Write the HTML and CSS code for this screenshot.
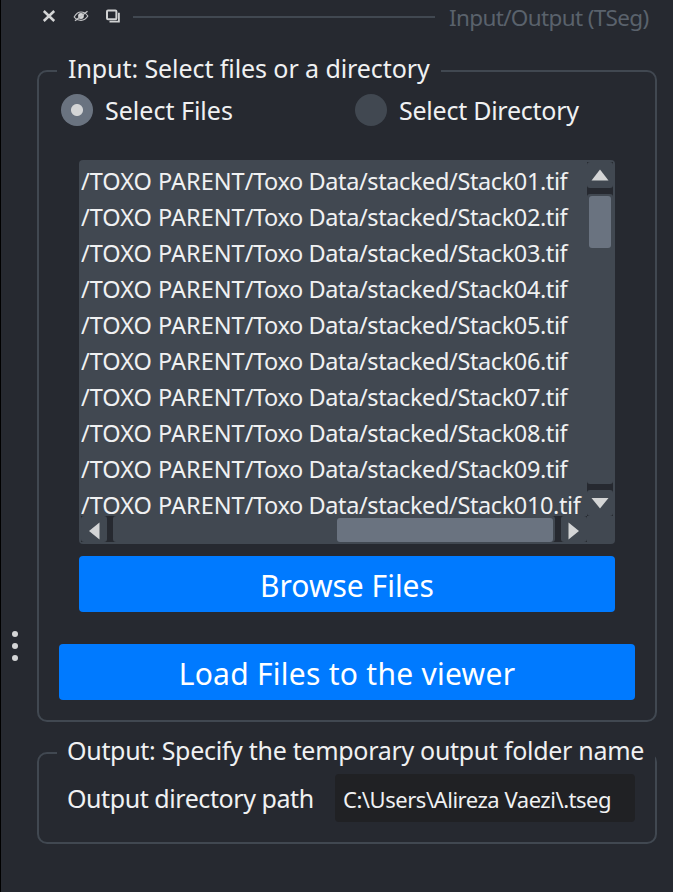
FILE: index.html
```html
<!DOCTYPE html>
<html lang="en">
<head>
<meta charset="utf-8">
<title>Input/Output (TSeg)</title>
<link rel="stylesheet" href="styles.css">
</head>
<body>
<div class="dock">
  <header class="titlebar">
    <svg class="icon" width="14" height="14" viewBox="0 0 14 14"><path d="M1.800 2 12.200 12M12.200 2 1.800 12" stroke="#d4d5d6" stroke-width="2.500"/></svg>
    <svg class="icon" width="16" height="14" viewBox="0 0 16 14" fill="none" stroke="#c3c4c6"><path d="M1.200 8C3 4.600 5.500 3 8 3s5 1.400 6.800 4C13 10 10.500 11.300 8 11.300S3 10.500 1.200 8Z" stroke-width="1.200"/><circle cx="8" cy="7" r="2.900" fill="#d4d5d6" stroke="none"/><path d="M2 11.700 14.500 2.300" stroke-width="1.400"/></svg>
    <svg class="icon" width="16" height="14" viewBox="0 0 16 14" fill="none" stroke="#d0d1d2"><rect x="2" y="1.500" width="9.400" height="8.800" rx="1" stroke-width="2"/><path d="M13.900 3.800V12.700H4.500" stroke-width="1.800"/></svg>
    <span class="rule"></span>
    <h1 class="title">Input/Output (TSeg)</h1>
  </header>
  <div class="body">
    <div class="grip"><i></i><i></i><i></i></div>
    <main class="groups">
      <fieldset class="group input-group">
        <legend><span class="t-input">Input: Select files or a directory</span></legend>
        <div class="radios">
          <label class="radio"><span class="dot on"></span><span class="t-files">Select Files</span></label>
          <label class="radio"><span class="dot"></span><span class="t-dir">Select Directory</span></label>
        </div>
        <div class="list">
          <div class="rows">
            <div>/TOXO PARENT<span>/Toxo Data/stacked/Stack01.tif</span></div>
            <div>/TOXO PARENT<span>/Toxo Data/stacked/Stack02.tif</span></div>
            <div>/TOXO PARENT<span>/Toxo Data/stacked/Stack03.tif</span></div>
            <div>/TOXO PARENT<span>/Toxo Data/stacked/Stack04.tif</span></div>
            <div>/TOXO PARENT<span>/Toxo Data/stacked/Stack05.tif</span></div>
            <div>/TOXO PARENT<span>/Toxo Data/stacked/Stack06.tif</span></div>
            <div>/TOXO PARENT<span>/Toxo Data/stacked/Stack07.tif</span></div>
            <div>/TOXO PARENT<span>/Toxo Data/stacked/Stack08.tif</span></div>
            <div>/TOXO PARENT<span>/Toxo Data/stacked/Stack09.tif</span></div>
            <div>/TOXO PARENT<span>/Toxo Data/stacked/Stack010.tif</span></div>
          </div>
          <div class="vbar">
            <span class="step"><svg width="26" height="26"><path d="M13 7.500 21.500 18.500H4.500Z"/></svg></span>
            <span class="track"><b></b></span>
            <span class="step"><svg width="26" height="26"><path d="M4.500 8H21.500L13 18.500Z"/></svg></span>
          </div>
          <div class="hbar">
            <span class="step"><svg width="26" height="26"><path d="M18.500 6.500V23.500L8 15Z"/></svg></span>
            <span class="track"><b></b></span>
            <span class="step"><svg width="26" height="26"><path d="M7.500 6.500V23.500L18 15Z"/></svg></span>
          </div>
        </div>
        <button class="btn browse"><span>Browse Files</span></button>
        <button class="btn load"><span>Load Files to the viewer</span></button>
      </fieldset>
      <fieldset class="group output-group">
        <legend><span class="t-output">Output: Specify the temporary output folder name</span></legend>
        <div class="field">
          <span class="t-path">Output directory path</span>
          <div class="entry"><span>C:\Users\Alireza Vaezi\.tseg</span></div>
        </div>
      </fieldset>
    </main>
  </div>
</div>
</body>
</html>
```

FILE: styles.css
```css
* { box-sizing: border-box; }
body {
  margin: 0;
  background: #262930;
  color: #f0f1f2;
  font: 25px/36px "Noto Sans", sans-serif;
  white-space: nowrap;
  overflow: hidden;
}
.dock { height: 892px; border-left: 1px solid #000; }
.titlebar { display: flex; height: 36px; padding: 0 24px 0 41px; }
.icon { flex: none; margin-top: 9px; margin-right: 17px; }
.icon + .icon { margin-right: 16px; }
.rule { flex: none; width: 302px; height: 2px; margin: 16px 14px 0 -4px; background: #414851; }
.title { margin: 0; width: 202px; font-size: 22.5px; font-weight: 400; letter-spacing: -0.65px; color: #5a626c; }
.body { display: flex; height: 856px; }
.grip {
  width: 36px; padding: 595px 0 0 11px;
  display: flex; flex-direction: column; gap: 6px;
}
.grip i { width: 6px; height: 6px; border-radius: 50%; background: #d4d5d6; }
.groups { width: 620px; padding-top: 16px; display: flex; flex-direction: column; gap: 12px; }
.group { margin: 0; min-width: 0; padding: 0 20px 0 18px; border: 2px solid #414851; border-radius: 10px; }
legend { height: 38px; padding: 0 0 0 11px; line-height: 32px; }
.t-input { letter-spacing: -0.08px; }
.t-output { letter-spacing: -0.3px; }
.t-dir { letter-spacing: -0.25px; }
.input-group { height: 670px; }
.input-group legend { width: 384px; }
.output-group { height: 110px; }
.output-group legend { width: 598px; padding-left: 10px; margin-right: -20px; }
.radios { display: flex; padding: 4px 0 0 4px; }
.radio { flex: none; display: flex; width: 294px; height: 32px; gap: 12px; line-height: 32px; }
.radio + .radio { width: 240px; }
.dot { width: 32px; height: 32px; border-radius: 50%; background: #414851; }
.dot.on { background: radial-gradient(circle, #d4d5d6 5.500px, #6a7380 6.500px); }
.list {
  display: grid;
  grid-template: 354px 26px / 506px 26px;
  width: 536px; height: 384px;
  margin: 34px 0 12px 22px;
  padding: 2px;
  border-radius: 4px;
  background: #414851;
}
.rows { overflow: hidden; padding-top: 1px; font-size: 23.500px; }
.rows span { letter-spacing: -0.39px; }
.step { flex: none; width: 26px; height: 26px; background: #414851; border-radius: 3px; }
.step svg { display: block; fill: #d4d5d6; }
.track { flex: 1; background: #414851; border-radius: 3px; }
.track b { display: block; background: #6a7380; border-radius: 3px; }
.vbar { display: flex; flex-direction: column; gap: 6px; background: #262930; }
.vbar .track { padding: 2px; }
.vbar b { height: 52px; }
.hbar { display: flex; gap: 6px; width: 506px; background: #262930; }
.hbar .track { padding: 2px 2px 0 224px; }
.hbar b { height: 24px; }
.btn {
  display: block; height: 56px; padding: 4px 0 0; border: 0; border-radius: 4px;
  background: #007aff; color: #fff; font: 30px/52px "Noto Sans", sans-serif;
}
.browse { width: 536px; margin-left: 22px; }
.load { width: 576px; margin: 32px 0 0 2px; letter-spacing: 0.27px; }
.field { display: flex; padding: 2px 0 0 10px; }
.t-path { width: 268px; line-height: 48px; letter-spacing: -0.43px; }
.entry {
  width: 300px; height: 48px; padding: 2px 8px;
  border-radius: 4px; background: #202124; font-size: 22px; line-height: 46px; letter-spacing: -0.47px;
}
```
